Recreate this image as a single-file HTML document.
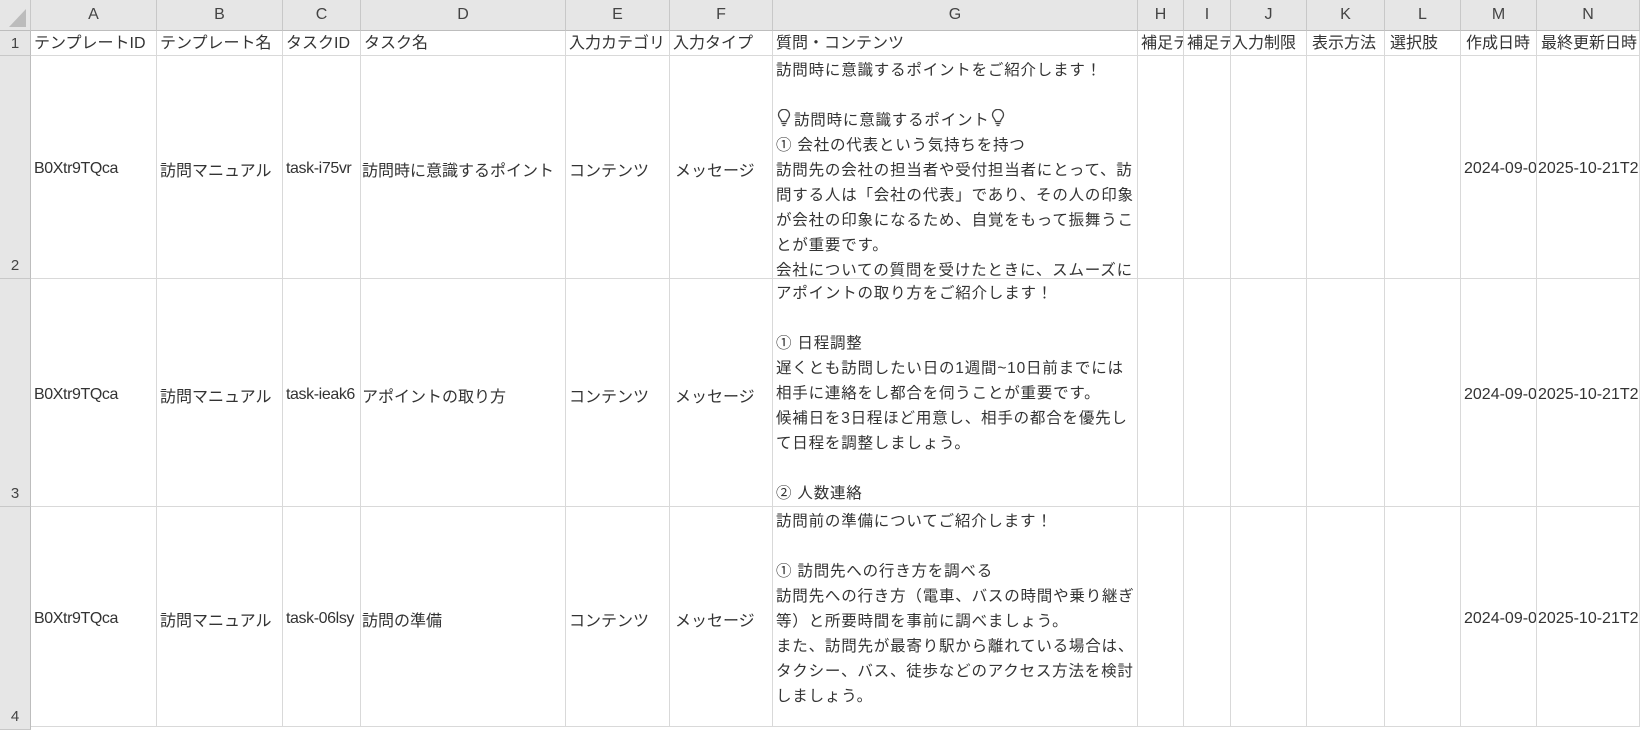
<!DOCTYPE html><html><head><meta charset="utf-8"><style>
*{margin:0;padding:0;box-sizing:border-box}
body{width:1640px;height:707px;overflow:hidden;background:#fff;font-family:"Liberation Sans","Noto Sans CJK JP",sans-serif;color:#333;position:relative}
.c{position:absolute;overflow:hidden;white-space:nowrap;font-size:16px;border-right:1px solid #d9d9d9;border-bottom:1px solid #d9d9d9;padding-left:3px}
.h{background:#e6e6e6;color:#444;text-align:center;font-size:16px;line-height:30px;border-right:1px solid #c8c8c8;border-bottom:1px solid #bdbdbd;padding:0}
.r{background:#e6e6e6;color:#444;text-align:center;font-size:15px;padding:0;border-right:1px solid #bdbdbd;border-bottom:1px solid #c8c8c8;display:flex;align-items:flex-end;justify-content:center;padding-bottom:4px}
.v{display:flex;align-items:center;padding-top:4px}
.g{white-space:pre;line-height:25px;padding-top:2px;letter-spacing:0.8px;font-size:15.5px}
.lat{letter-spacing:-0.4px}
.b{display:inline-block;vertical-align:-2px;margin:0 3px 0 1px}
</style></head><body>
<div class="c h" style="left:0;top:0;width:31px;height:31px"><svg width="30" height="30" style="position:absolute;left:0;top:0"><polygon points="26,9 26,27 9,27" fill="#bcbcbc"/></svg></div>
<div class="c h" style="left:31px;top:0;width:126px;height:31px">A</div>
<div class="c h" style="left:157px;top:0;width:126px;height:31px">B</div>
<div class="c h" style="left:283px;top:0;width:78px;height:31px">C</div>
<div class="c h" style="left:361px;top:0;width:205px;height:31px">D</div>
<div class="c h" style="left:566px;top:0;width:104px;height:31px">E</div>
<div class="c h" style="left:670px;top:0;width:103px;height:31px">F</div>
<div class="c h" style="left:773px;top:0;width:365px;height:31px">G</div>
<div class="c h" style="left:1138px;top:0;width:46px;height:31px">H</div>
<div class="c h" style="left:1184px;top:0;width:47px;height:31px">I</div>
<div class="c h" style="left:1231px;top:0;width:76px;height:31px">J</div>
<div class="c h" style="left:1307px;top:0;width:78px;height:31px">K</div>
<div class="c h" style="left:1385px;top:0;width:76px;height:31px">L</div>
<div class="c h" style="left:1461px;top:0;width:76px;height:31px">M</div>
<div class="c h" style="left:1537px;top:0;width:103px;height:31px">N</div>
<div class="c r" style="left:0;top:31px;width:31px;height:25px;align-items:center;padding-bottom:0">1</div>
<div class="c r" style="left:0;top:56px;width:31px;height:223px">2</div>
<div class="c r" style="left:0;top:279px;width:31px;height:228px">3</div>
<div class="c r" style="left:0;top:507px;width:31px;height:223px">4</div>
<div class="c" style="left:31px;top:31px;width:126px;height:25px;line-height:26px">テンプレートID</div>
<div class="c" style="left:157px;top:31px;width:126px;height:25px;line-height:26px">テンプレート名</div>
<div class="c" style="left:283px;top:31px;width:78px;height:25px;line-height:26px">タスクID</div>
<div class="c" style="left:361px;top:31px;width:205px;height:25px;line-height:26px">タスク名</div>
<div class="c" style="left:566px;top:31px;width:104px;height:25px;line-height:26px">入力カテゴリ</div>
<div class="c" style="left:670px;top:31px;width:103px;height:25px;line-height:26px">入力タイプ</div>
<div class="c" style="left:773px;top:31px;width:365px;height:25px;line-height:26px">質問・コンテンツ</div>
<div class="c" style="left:1138px;top:31px;width:46px;height:25px;line-height:26px">補足テ</div>
<div class="c" style="left:1184px;top:31px;width:47px;height:25px;line-height:26px">補足テ</div>
<div class="c" style="left:1231px;top:31px;width:76px;height:25px;line-height:26px;padding-left:1px">入力制限</div>
<div class="c" style="left:1307px;top:31px;width:78px;height:25px;line-height:26px;padding-left:5px">表示方法</div>
<div class="c" style="left:1385px;top:31px;width:76px;height:25px;line-height:26px;padding-left:5px">選択肢</div>
<div class="c" style="left:1461px;top:31px;width:76px;height:25px;line-height:26px;padding-left:5px">作成日時</div>
<div class="c" style="left:1537px;top:31px;width:103px;height:25px;line-height:26px;padding-left:4px">最終更新日時</div>

<div class="c v lat" style="left:31px;top:56px;width:126px;height:223px">B0Xtr9TQca</div>
<div class="c v" style="left:157px;top:56px;width:126px;height:223px">訪問マニュアル</div>
<div class="c v lat" style="left:283px;top:56px;width:78px;height:223px">task-i75vr</div>
<div class="c v" style="left:361px;top:56px;width:205px;height:223px;padding-left:1px">訪問時に意識するポイント</div>
<div class="c v" style="left:566px;top:56px;width:104px;height:223px">コンテンツ</div>
<div class="c v" style="left:670px;top:56px;width:103px;height:223px;padding-left:5px">メッセージ</div>
<div class="c g" style="left:773px;top:56px;width:365px;height:223px">訪問時に意識するポイントをご紹介します！

<svg class="b" width="14" height="18" viewBox="0 0 14 18"><path d="M4.5 12.5 C4.5 10 1.5 9 1.5 5.8 A5.5 5.5 0 0 1 12.5 5.8 C12.5 9 9.5 10 9.5 12.5 Z M4.5 14.5 H9.5 M5.5 16.5 H8.5" fill="none" stroke="#444" stroke-width="1.3"/></svg>訪問時に意識するポイント<svg class="b" width="14" height="18" viewBox="0 0 14 18"><path d="M4.5 12.5 C4.5 10 1.5 9 1.5 5.8 A5.5 5.5 0 0 1 12.5 5.8 C12.5 9 9.5 10 9.5 12.5 Z M4.5 14.5 H9.5 M5.5 16.5 H8.5" fill="none" stroke="#444" stroke-width="1.3"/></svg>
① 会社の代表という気持ちを持つ
訪問先の会社の担当者や受付担当者にとって、訪
問する人は「会社の代表」であり、その人の印象
が会社の印象になるため、自覚をもって振舞うこ
とが重要です。
会社についての質問を受けたときに、スムーズに</div>
<div class="c" style="left:1138px;top:56px;width:46px;height:223px"></div>
<div class="c" style="left:1184px;top:56px;width:47px;height:223px"></div>
<div class="c" style="left:1231px;top:56px;width:76px;height:223px"></div>
<div class="c" style="left:1307px;top:56px;width:78px;height:223px"></div>
<div class="c" style="left:1385px;top:56px;width:76px;height:223px"></div>
<div class="c v" style="left:1461px;top:56px;width:76px;height:223px">2024-09-05</div>
<div class="c v" style="left:1537px;top:56px;width:103px;height:223px;padding-left:1px">2025-10-21T2</div>

<div class="c v lat" style="left:31px;top:279px;width:126px;height:228px">B0Xtr9TQca</div>
<div class="c v" style="left:157px;top:279px;width:126px;height:228px">訪問マニュアル</div>
<div class="c v lat" style="left:283px;top:279px;width:78px;height:228px">task-ieak6</div>
<div class="c v" style="left:361px;top:279px;width:205px;height:228px;padding-left:1px">アポイントの取り方</div>
<div class="c v" style="left:566px;top:279px;width:104px;height:228px">コンテンツ</div>
<div class="c v" style="left:670px;top:279px;width:103px;height:228px;padding-left:5px">メッセージ</div>
<div class="c g" style="left:773px;top:279px;width:365px;height:228px">アポイントの取り方をご紹介します！

① 日程調整
遅くとも訪問したい日の1週間~10日前までには
相手に連絡をし都合を伺うことが重要です。
候補日を3日程ほど用意し、相手の都合を優先し
て日程を調整しましょう。

② 人数連絡</div>
<div class="c" style="left:1138px;top:279px;width:46px;height:228px"></div>
<div class="c" style="left:1184px;top:279px;width:47px;height:228px"></div>
<div class="c" style="left:1231px;top:279px;width:76px;height:228px"></div>
<div class="c" style="left:1307px;top:279px;width:78px;height:228px"></div>
<div class="c" style="left:1385px;top:279px;width:76px;height:228px"></div>
<div class="c v" style="left:1461px;top:279px;width:76px;height:228px">2024-09-05</div>
<div class="c v" style="left:1537px;top:279px;width:103px;height:228px;padding-left:1px">2025-10-21T2</div>

<div class="c v lat" style="left:31px;top:507px;width:126px;height:220px">B0Xtr9TQca</div>
<div class="c v" style="left:157px;top:507px;width:126px;height:220px">訪問マニュアル</div>
<div class="c v lat" style="left:283px;top:507px;width:78px;height:220px">task-06lsy</div>
<div class="c v" style="left:361px;top:507px;width:205px;height:220px;padding-left:1px">訪問の準備</div>
<div class="c v" style="left:566px;top:507px;width:104px;height:220px">コンテンツ</div>
<div class="c v" style="left:670px;top:507px;width:103px;height:220px;padding-left:5px">メッセージ</div>
<div class="c g" style="left:773px;top:507px;width:365px;height:220px">訪問前の準備についてご紹介します！

① 訪問先への行き方を調べる
訪問先への行き方（電車、バスの時間や乗り継ぎ
等）と所要時間を事前に調べましょう。
また、訪問先が最寄り駅から離れている場合は、
タクシー、バス、徒歩などのアクセス方法を検討
しましょう。</div>
<div class="c" style="left:1138px;top:507px;width:46px;height:220px"></div>
<div class="c" style="left:1184px;top:507px;width:47px;height:220px"></div>
<div class="c" style="left:1231px;top:507px;width:76px;height:220px"></div>
<div class="c" style="left:1307px;top:507px;width:78px;height:220px"></div>
<div class="c" style="left:1385px;top:507px;width:76px;height:220px"></div>
<div class="c v" style="left:1461px;top:507px;width:76px;height:220px">2024-09-05</div>
<div class="c v" style="left:1537px;top:507px;width:103px;height:220px;padding-left:1px">2025-10-21T2</div>
</body></html>
